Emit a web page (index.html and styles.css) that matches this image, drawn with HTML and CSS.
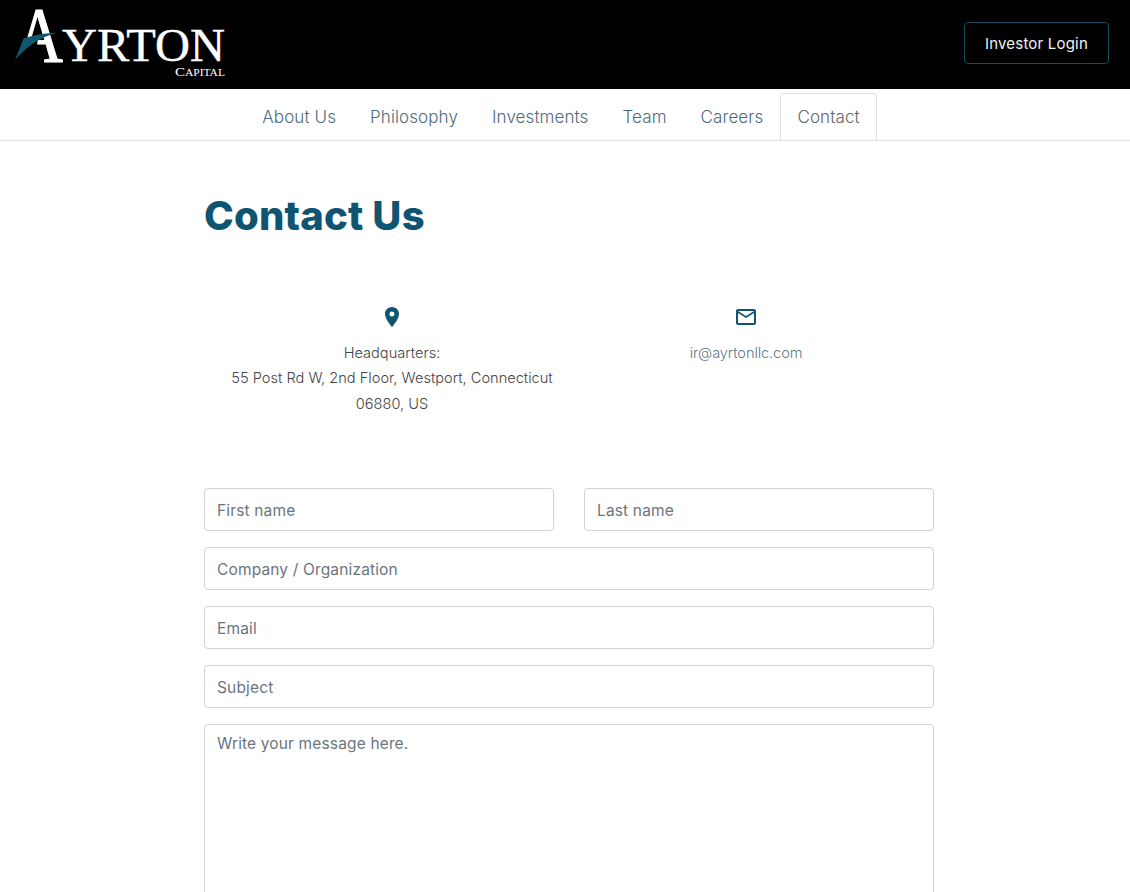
FILE: index.html
```html
<!DOCTYPE html>
<html lang="en">
<head>
  <meta charset="UTF-8">
  <meta name="viewport" content="width=device-width, initial-scale=1.0">
  <title>Contact Us - Ayrton Capital</title>
  <link rel="stylesheet" href="styles.css">
</head>
<body>
  <header class="top-bar">
    <a href="#" class="logo" aria-label="Ayrton Capital">
      <svg width="240" height="89" viewBox="0 0 240 89">
        <text x="16" y="61" class="logo-a" textLength="47" lengthAdjust="spacingAndGlyphs">A</text>
        <polygon points="8,63 35,63 38,37 20,37" fill="#000"/>
        <path d="M15 60 L23.500 38.500 C33 35 46 33 57 33 C42 36 28 45 15 60 Z" fill="#12566f"/>
        <text x="62" y="61" class="logo-name" textLength="163" lengthAdjust="spacingAndGlyphs">YRTON</text>
        <text x="175" y="76" class="logo-sub" textLength="50" lengthAdjust="spacingAndGlyphs">C<tspan class="logo-small">APITAL</tspan></text>
      </svg>
    </a>
    <a href="#" class="login-btn">Investor Login</a>
  </header>

  <nav class="main-nav">
    <ul>
      <li><a href="#">About Us</a></li>
      <li><a href="#">Philosophy</a></li>
      <li><a href="#">Investments</a></li>
      <li><a href="#">Team</a></li>
      <li><a href="#">Careers</a></li>
      <li><a href="#" class="active">Contact</a></li>
    </ul>
  </nav>

  <main class="content">
    <h1>Contact Us</h1>

    <div class="contact-info">
      <div class="info-col">
        <svg class="info-icon" width="24" height="24" viewBox="0 0 24 24">
          <path d="M12 2C8.130 2 5 5.130 5 9c0 5.250 7 13 7 13s7-7.750 7-13c0-3.870-3.130-7-7-7zm0 9.500a2.500 2.500 0 1 1 0-5 2.500 2.500 0 0 1 0 5z" fill="#0f5471"/>
        </svg>
        <p>Headquarters:<br>55 Post Rd W, 2nd Floor, Westport, Connecticut<br>06880, US</p>
      </div>
      <div class="info-col">
        <svg class="info-icon" width="24" height="24" viewBox="0 0 24 24">
          <path d="M20 4H4c-1.100 0-2 .9-2 2v12c0 1.100.9 2 2 2h16c1.100 0 2-.9 2-2V6c0-1.100-.9-2-2-2zm0 14H4V8l8 5 8-5v10zm-8-7L4 6h16l-8 5z" fill="#0f5471"/>
        </svg>
        <p><a href="#">ir@ayrtonllc.com</a></p>
      </div>
    </div>

    <form class="contact-form">
      <div class="name-row">
        <input type="text" placeholder="First name">
        <input type="text" placeholder="Last name">
      </div>
      <input type="text" placeholder="Company / Organization">
      <input type="text" placeholder="Email">
      <input type="text" placeholder="Subject">
      <textarea placeholder="Write your message here."></textarea>
    </form>
  </main>
</body>
</html>
```

FILE: styles.css
```css
/* Ayrton contact page */
html, body {
  height: 892px;
  overflow: hidden;
}

body {
  font-family: 'Inter', 'Lato', sans-serif;
  margin: 0;
  padding: 0;
  background-color: #fff;
  color: #444;
}

.top-bar {
  background-color: #000;
  height: 89px;
  display: flex;
  justify-content: space-between;
  align-items: center;
  padding-right: 21px;
}

.logo {
  display: block;
  height: 89px;
}

.logo-a,
.logo-name,
.logo-sub {
  font-family: 'Liberation Serif', serif;
  fill: #fff;
}

.logo-a {
  font-size: 78px;
  stroke: #fff;
  stroke-width: 1px;
}

.logo-name {
  font-size: 47px;
  stroke: #fff;
  stroke-width: 0.4px;
}

.logo-sub {
  font-size: 13px;
}

.logo-small {
  font-size: 10px;
}

.login-btn {
  display: block;
  color: #f2f2f2;
  text-decoration: none;
  font-size: 15px;
  letter-spacing: 0.2px;
  line-height: 24px;
  padding: 9px 20px 7px;
  margin-top: -4px;
  border: 1px solid #1b4a5f;
  border-radius: 4px;
}

.main-nav {
  height: 52px;
  box-sizing: border-box;
  border-bottom: 1px solid #dee2e6;
}

.main-nav ul {
  list-style-type: none;
  margin: 0;
  padding: 4px 8px 0 0;
  display: flex;
  justify-content: center;
}

.main-nav a {
  display: block;
  color: #4f6b7b;
  text-decoration: none;
  font-size: 17px;
  font-weight: 300;
  letter-spacing: 0.1px;
  line-height: 27px;
  padding: 10px 16px;
  border: 1px solid transparent;
  border-bottom: 0;
  border-radius: 4px 4px 0 0;
}

.main-nav a.active {
  color: #5f6468;
  background-color: #fff;
  border-color: #dee2e6;
  height: 47px;
  box-sizing: border-box;
}

.content {
  width: 730px;
  margin: 0 0 0 204px;
}

h1 {
  color: #0f5471;
  font-size: 40px;
  font-weight: 800;
  letter-spacing: 0.2px;
  line-height: 48px;
  margin: 51px 0 0;
}

.contact-info {
  display: grid;
  grid-template-columns: 354px 354px;
  margin: 65px 11px 0;
}

.info-col {
  text-align: center;
  font-size: 14.600px;
  font-weight: 300;
  line-height: 25.400px;
}

.info-col p {
  margin: 12px 0 0;
}

.info-col a {
  color: #5f7b8a;
  letter-spacing: -0.1px;
  text-decoration: none;
}

.info-icon {
  display: block;
  margin: 0 auto;
}

.contact-form {
  display: flex;
  flex-direction: column;
  gap: 16px;
  margin-top: 70.300px;
}

.name-row {
  display: flex;
  gap: 30px;
}

input,
textarea {
  display: block;
  width: 100%;
  box-sizing: border-box;
  font-family: inherit;
  font-size: 15.500px;
  letter-spacing: 0.15px;
  color: #495057;
  border: 1px solid #ced4da;
  border-radius: 4px;
  padding: 9px 12px 7px;
  height: 43px;
  margin: 0;
}

textarea {
  height: 240px;
  resize: vertical;
}

::placeholder {
  color: #6c757d;
  opacity: 1;
}
```
